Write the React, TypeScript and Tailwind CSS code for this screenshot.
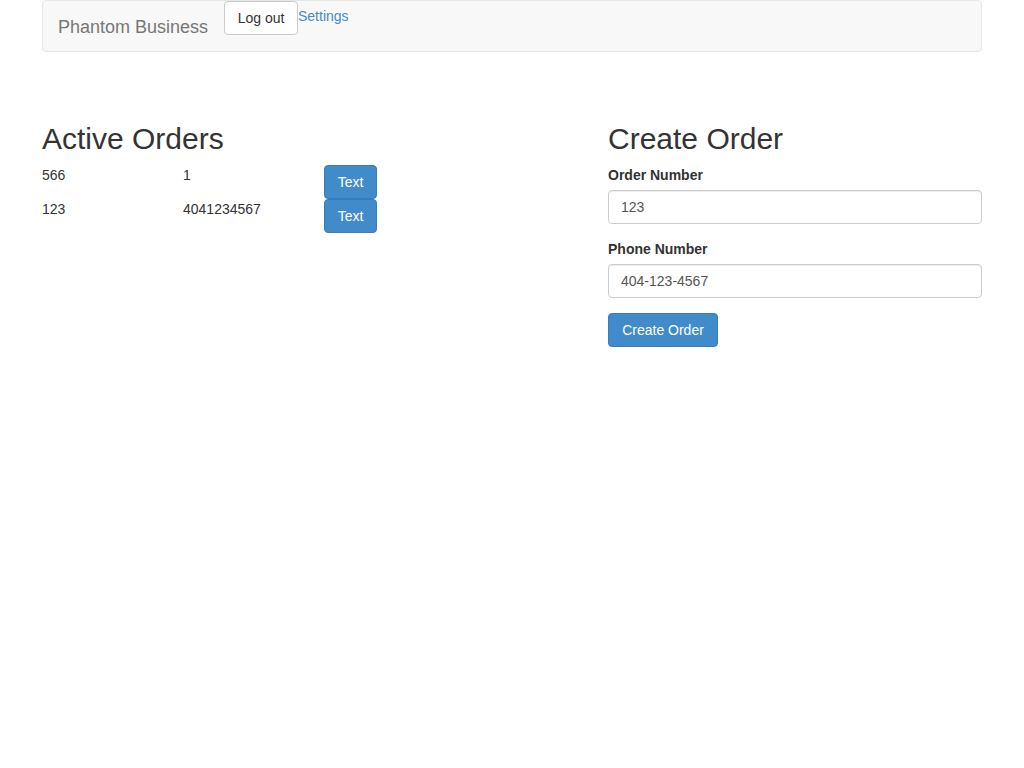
import { useState } from "react";

type Order = { id: string; phone: string };

const ORDERS: Order[] = [
  { id: "566", phone: "1" },
  { id: "123", phone: "4041234567" },
];

export default function App() {
  const [orderNumber, setOrderNumber] = useState("123");
  const [phone, setPhone] = useState("404-123-4567");

  return (
    <div className="min-h-screen bg-white text-[14px] leading-[20px] text-[#333]" style={{ fontFamily: '"Liberation Sans", Arial, sans-serif' }}>
      <div className="w-[970px] mx-auto px-[15px]">
        {/* Navbar */}
        <nav className="flex items-start h-[52px] bg-[#f8f8f8] border border-[#e7e7e7] rounded-[4px]">
          <a href="#" className="w-[181px] h-[50px] pl-[15px] pt-[16px] pb-[14px] text-[18px] leading-[20px] text-[#777]">
            Phantom Business
          </a>
          <div className="flex items-start">
            <button className="w-[74px] py-[6px] bg-white border border-[#ccc] rounded-[4px] text-[14px] leading-[20px] text-[#333]">
              Log out
            </button>
            <a href="#" className="mt-[5px] text-[#428bca]">
              Settings
            </a>
          </div>
        </nav>

        <div className="grid grid-cols-[566px_374px] mt-[70px]">
          {/* Active orders */}
          <div>
            <h2 className="text-[30px] leading-[33px] font-normal mb-[10px]">Active Orders</h2>
            <div>
              {ORDERS.map((o) => (
                <div key={o.id} className="grid grid-cols-[141px_141px_141px] items-start">
                  <div>{o.id}</div>
                  <div>{o.phone}</div>
                  <div>
                    <button className="w-[53px] py-[6px] bg-[#428bca] border border-[#357ebd] rounded-[4px] text-white leading-[20px]">
                      Text
                    </button>
                  </div>
                </div>
              ))}
            </div>
          </div>

          {/* Create order */}
          <div>
            <h2 className="text-[30px] leading-[33px] font-normal mb-[10px]">Create Order</h2>
            <div className="mb-[15px]">
              <label className="block font-bold mb-[5px]">Order Number</label>
              <input
                value={orderNumber}
                onChange={(e) => setOrderNumber(e.target.value)}
                className="block w-full h-[34px] px-[12px] py-[6px] border border-[#ccc] rounded-[4px] text-[#555] shadow-[inset_0_1px_1px_rgba(0,0,0,0.075)] outline-none"
              />
            </div>
            <div className="mb-[15px]">
              <label className="block font-bold mb-[5px]">Phone Number</label>
              <input
                value={phone}
                onChange={(e) => setPhone(e.target.value)}
                className="block w-full h-[34px] px-[12px] py-[6px] border border-[#ccc] rounded-[4px] text-[#555] shadow-[inset_0_1px_1px_rgba(0,0,0,0.075)] outline-none"
              />
            </div>
            <button className="w-[110px] py-[6px] bg-[#428bca] border border-[#357ebd] rounded-[4px] text-white leading-[20px]">
              Create Order
            </button>
          </div>
        </div>
      </div>
    </div>
  );
}
